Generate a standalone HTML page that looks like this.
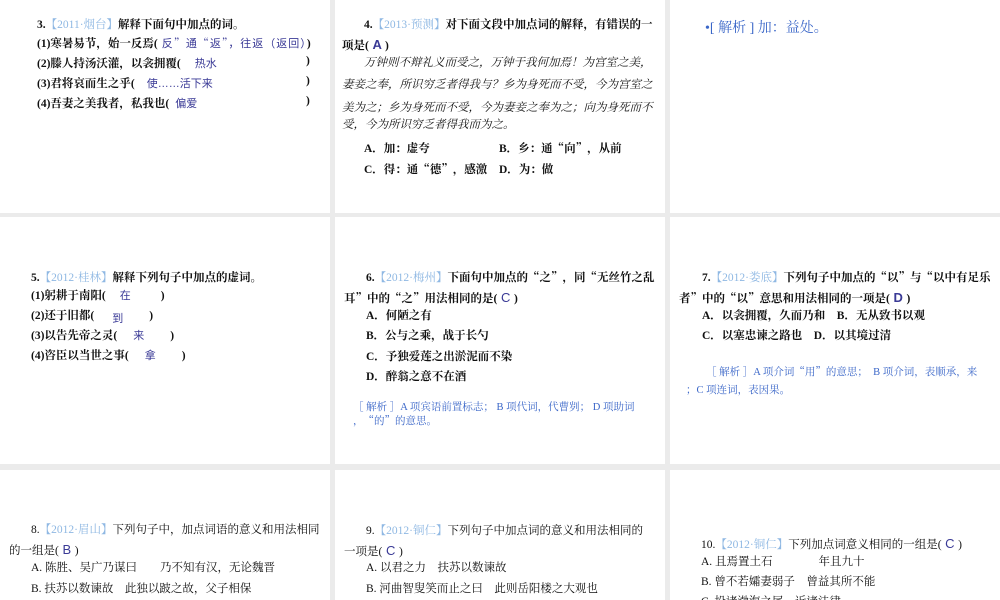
<!DOCTYPE html>
<html><head><meta charset="utf-8"><style>
body{margin:0;width:1000px;height:600px;background:#ebebeb;position:relative;overflow:hidden;font-family:"Liberation Serif","Noto Serif CJK SC",serif;font-size:11.5px;color:#111}
.c{position:absolute;background:#fff;overflow:hidden}
.t{position:absolute;white-space:nowrap;font-weight:bold}
.n{font-weight:normal}
.s{color:#8fb8e3;font-weight:normal}
.a{color:#3a3a96;font-weight:normal;font-family:"Liberation Sans","Noto Sans CJK SC",sans-serif;font-size:11px}
.j{color:#3a66c8;font-weight:normal;font-size:10.5px}
.k{font-family:"Noto Serif CJK SC",serif;font-style:italic;font-weight:normal}
.q{font-family:"Noto Serif CJK SC",serif}
</style></head><body>
<div class="c" style="left:0;top:0;width:330px;height:213px">
<div class="t" style="left:37px;top:16px">3.<span class="s">【2011·烟台】</span>解释下面句中加点的词。</div>
<div class="t" style="left:37px;top:35px">(1)寒暑易节，始一反焉(<span class="a" style="letter-spacing:1px"> 反<span class="q">”</span>通<span class="q">“</span>返<span class="q">”</span>，往返（返回）</span>)</div>
<div class="t" style="left:37px;top:55px">(2)滕人持汤沃灌，以衾拥覆(<span class="a" style="margin-left:14px">热水</span></div><div class="t" style="left:306px;top:55px">)</div>
<div class="t" style="left:37px;top:75px">(3)君将哀而生之乎(<span class="a" style="margin-left:12px">使……活下来</span></div><div class="t" style="left:306px;top:75px">)</div>
<div class="t" style="left:37px;top:95px">(4)吾妻之美我者，私我也(<span class="a" style="margin-left:6px">偏爱</span></div><div class="t" style="left:306px;top:95px">)</div>
</div>
<div class="c" style="left:335px;top:0;width:330px;height:213px">
<div class="t" style="left:29px;top:16px">4.<span class="s">【2013·预测】</span>对下面文段中加点词的解释，有错误的一</div>
<div class="t" style="left:7px;top:37px">项是(<span class="a" style="font-size:13px;font-weight:bold"> A </span>)</div>
<div class="t k" style="left:29px;top:54px">万钟则不辩礼义而受之，万钟于我何加焉！为宫室之美，</div>
<div class="t k" style="left:7px;top:76px">妻妾之奉，所识穷乏者得我与？乡为身死而不受，今为宫室之</div>
<div class="t k" style="left:7px;top:99px">美为之；乡为身死而不受，今为妻妾之奉为之；向为身死而不</div>
<div class="t k" style="left:7px;top:116px">受，今为所识穷乏者得我而为之。</div>
<div class="t" style="left:29px;top:140px">A．加：虚夸</div><div class="t" style="left:164px;top:140px">B．乡：通<span class="q">“</span>向<span class="q">”</span>，从前</div>
<div class="t" style="left:29px;top:161px">C．得：通<span class="q">“</span>德<span class="q">”</span>，感激</div><div class="t" style="left:164px;top:161px">D．为：做</div>
</div>
<div class="c" style="left:670px;top:0;width:330px;height:213px">
<div class="t j" style="left:35px;top:17px;font-size:14px">•[ 解析 ] 加：益处。</div>
</div>
<div class="c" style="left:0;top:217px;width:330px;height:247px">
<div class="t" style="left:31px;top:52px">5.<span class="s">【2012·桂林】</span>解释下列句子中加点的虚词。</div>
<div class="t" style="left:31px;top:70px">(1)躬耕于南阳(<span class="a" style="margin-left:14px">在</span><span style="margin-left:30px">)</span></div>
<div class="t" style="left:31px;top:90px">(2)还于旧都(<span class="a" style="position:relative;top:3px;margin-left:18px">到</span><span style="margin-left:26px">)</span></div>
<div class="t" style="left:31px;top:110px">(3)以告先帝之灵(<span class="a" style="margin-left:16px">来</span><span style="margin-left:26px">)</span></div>
<div class="t" style="left:31px;top:130px">(4)咨臣以当世之事(<span class="a" style="margin-left:16px">拿</span><span style="margin-left:26px">)</span></div>
</div>
<div class="c" style="left:335px;top:217px;width:330px;height:247px">
<div class="t" style="left:31px;top:52px">6.<span class="s">【2012·梅州】</span>下面句中加点的<span class="q">“</span>之<span class="q">”</span>，同<span class="q">“</span>无丝竹之乱</div>
<div class="t" style="left:9px;top:73px">耳<span class="q">”</span>中的<span class="q">“</span>之<span class="q">”</span>用法相同的是(<span class="a" style="font-size:13px"> C </span>)</div>
<div class="t" style="left:31px;top:90px">A．何陋之有</div>
<div class="t" style="left:31px;top:110px">B．公与之乘，战于长勺</div>
<div class="t" style="left:31px;top:131px">C．予独爱莲之出淤泥而不染</div>
<div class="t" style="left:31px;top:151px">D．醉翁之意不在酒</div>
<div class="t j" style="left:18px;top:182px">［ 解析 ］A 项宾语前置标志； B 项代词，代曹刿； D 项助词</div>
<div class="t j" style="left:18px;top:196px">，<span class="q">“</span>的<span class="q">”</span>的意思。</div>
</div>
<div class="c" style="left:670px;top:217px;width:330px;height:247px">
<div class="t" style="left:32px;top:52px">7.<span class="s">【2012·娄底】</span>下列句子中加点的<span class="q">“</span>以<span class="q">”</span>与<span class="q">“</span>以中有足乐</div>
<div class="t" style="left:9px;top:73px">者<span class="q">”</span>中的<span class="q">“</span>以<span class="q">”</span>意思和用法相同的一项是(<span class="a" style="font-size:13px;font-weight:bold"> D </span>)</div>
<div class="t" style="left:32px;top:90px">A．以衾拥覆，久而乃和　B．无从致书以观</div>
<div class="t" style="left:32px;top:110px">C．以塞忠谏之路也　D．以其境过清</div>
<div class="t j" style="left:36px;top:147px">［ 解析 ］A 项介词<span class="q">“</span>用<span class="q">”</span>的意思；　B 项介词，表顺承，来</div>
<div class="t j" style="left:16px;top:165px">；C 项连词，表因果。</div>
</div>
<div class="c" style="left:0;top:470px;width:330px;height:130px">
<div class="t n" style="left:31px;top:51px">8.<span class="s">【2012·眉山】</span>下列句子中，加点词语的意义和用法相同</div>
<div class="t n" style="left:9px;top:72px">的一组是(<span class="a" style="font-size:13px"> B </span>)</div>
<div class="t n" style="left:31px;top:89px">A. 陈胜、吴广乃谋曰　　乃不知有汉，无论魏晋</div>
<div class="t n" style="left:31px;top:110px">B. 扶苏以数谏故　此独以跛之故，父子相保</div>
</div>
<div class="c" style="left:335px;top:470px;width:330px;height:130px">
<div class="t n" style="left:31px;top:52px">9.<span class="s">【2012·铜仁】</span>下列句子中加点词的意义和用法相同的</div>
<div class="t n" style="left:9px;top:73px">一项是(<span class="a" style="font-size:13px"> C </span>)</div>
<div class="t n" style="left:31px;top:89px">A. 以君之力　扶苏以数谏故</div>
<div class="t n" style="left:31px;top:110px">B. 河曲智叟笑而止之曰　此则岳阳楼之大观也</div>
</div>
<div class="c" style="left:670px;top:470px;width:330px;height:130px">
<div class="t n" style="left:31px;top:66px">10.<span class="s">【2012·铜仁】</span>下列加点词意义相同的一组是(<span class="a" style="font-size:13px"> C </span>)</div>
<div class="t n" style="left:31px;top:83px">A. 且焉置土石　　　　年且九十</div>
<div class="t n" style="left:31px;top:103px">B. 曾不若孀妻弱子　曾益其所不能</div>
<div class="t n" style="left:31px;top:123px">C. 投诸渤海之尾　近诸法律</div>
</div>
</body></html>
